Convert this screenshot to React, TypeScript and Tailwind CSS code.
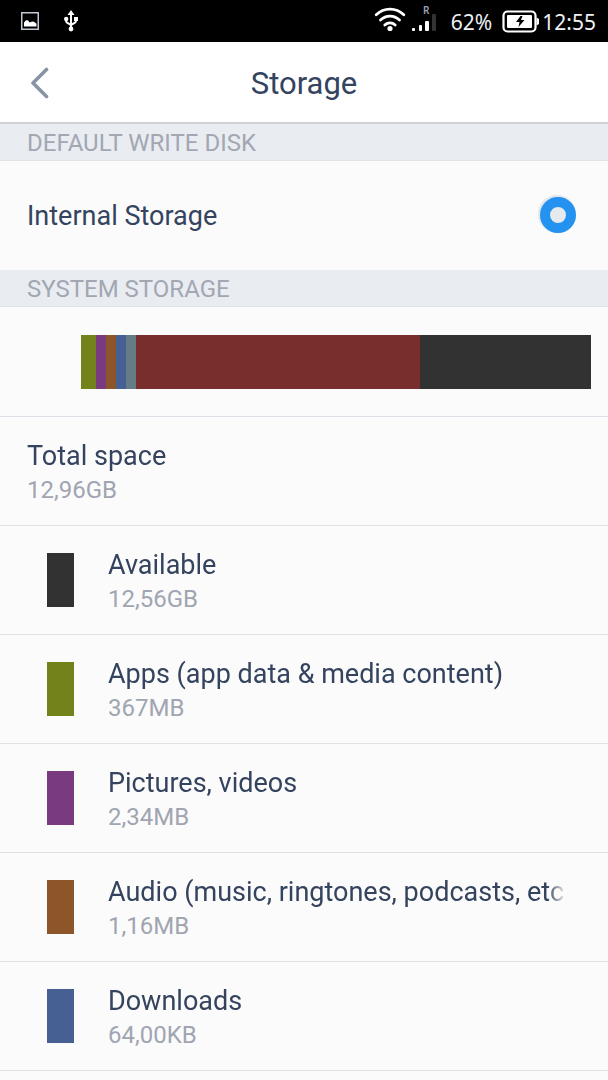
import { useState } from 'react';

interface StorageItem {
    label: string;
    size: string;
    swatch: string;
}

const segments = [
    { color: 'bg-[#74821c]', share: 15 },
    { color: 'bg-[#793a80]', share: 10 },
    { color: 'bg-[#8d5629]', share: 10 },
    { color: 'bg-[#466094]', share: 10 },
    { color: 'bg-[#637c85]', share: 10 },
    { color: 'bg-[#792e2e]', share: 284 },
    { color: 'bg-[#323232]', share: 171 },
];

const items: StorageItem[] = [
    { label: 'Available', size: '12,56GB', swatch: 'bg-[#323232]' },
    {
        label: 'Apps (app data & media content)',
        size: '367MB',
        swatch: 'bg-[#74821c]',
    },
    { label: 'Pictures, videos', size: '2,34MB', swatch: 'bg-[#793a80]' },
    {
        label: 'Audio (music, ringtones, podcasts, etc.)',
        size: '1,16MB',
        swatch: 'bg-[#8d5629]',
    },
    { label: 'Downloads', size: '64,00KB', swatch: 'bg-[#466094]' },
];

function StatusBar() {
    return (
        <div className="flex h-[42px] items-center justify-between bg-black pr-3 pl-5 font-['Noto_Sans',sans-serif] text-[21px] leading-[28px] text-[#eef0f5]">
            <div className="flex items-center gap-6">
                <svg width="20" height="20" viewBox="0 0 20 20">
                    <rect
                        x="1.75"
                        y="1.75"
                        width="16.5"
                        height="16.5"
                        fill="none"
                        stroke="#c3c8d8"
                        strokeWidth="1.5"
                    />
                    <path
                        d="M4 15.5v-4l1.5-1.8 1.5-.6 1.5.8 1.2 1.6 1.8-.7 1.5-.3 1.7.7 1.8 1.5v2.800z"
                        fill="#fff"
                    />
                </svg>
                <svg
                    width="14"
                    height="22"
                    viewBox="0 0 14 22"
                    fill="none"
                    stroke="#fff"
                    strokeWidth="2"
                >
                    <path d="M7 3v16M2 9v2c0 3 5 2 5 5M12 9v2c0 3-5 2-5 5" />
                    <path d="M7 0 10.500 5h-7z" fill="#fff" stroke="none" />
                    <circle cx="2.200" cy="9" r="2.200" fill="#fff" stroke="none" />
                    <path d="M10 7h4v4h-4z" fill="#fff" stroke="none" />
                    <circle cx="7" cy="19" r="2.400" fill="#fff" stroke="none" />
                </svg>
            </div>

            <div className="flex items-center">
                <svg
                    width="32"
                    height="28"
                    viewBox="0 0 32 28"
                    fill="none"
                    stroke="#fff"
                    strokeWidth="2.800"
                    strokeLinecap="round"
                >
                    <path d="M2.200 7.800C10 .2 22 .2 29.800 7.800" />
                    <path d="M6.500 13C12 7.800 20 7.800 25.500 13" />
                    <path d="M10.800 18c3-2.800 7.400-2.800 10.400 0" />
                    <circle cx="16" cy="21.500" r="2.600" fill="#fff" stroke="none" />
                </svg>
                {/* Signal strength with roaming mark */}
                <svg className="ml-1.5" width="25" height="34" viewBox="0 0 25 34">
                    <text
                        x="11"
                        y="10"
                        fontSize="10"
                        fontWeight="600"
                        fill="#9aa1b3"
                    >
                        R
                    </text>
                    <g fill="#fff">
                        <rect x="0" y="24" width="3" height="3" rx="1" />
                        <rect x="7" y="21" width="3" height="6" rx="1" />
                        <rect x="13" y="17" width="4" height="10" rx="1" />
                    </g>
                    <rect x="20" y="10" width="4" height="17" rx="1" fill="#333" />
                </svg>
                <span className="ml-3.5 pt-0.5">62%</span>
                <svg className="ml-2.5" width="38" height="24" viewBox="0 0 38 24">
                    <rect
                        x="1.500"
                        y="2.500"
                        width="32"
                        height="20"
                        rx="4"
                        fill="none"
                        stroke="#fff"
                        strokeWidth="2.200"
                    />
                    <rect x="5" y="6" width="25" height="13" rx="1" fill="#fff" />
                    <path d="M34.500 8.500l2.500 1.500v5l-2.500 1.500z" fill="#fff" />
                    <path d="M18.500 7 14 13h3.500L16.500 18l6-7h-3.500L20.500 7z" fill="#000" />
                </svg>
                <span className="ml-0.5 pt-0.5">12:55</span>
            </div>
        </div>
    );
}

function SectionTitle({ children }: { children: string }) {
    return (
        <h2 className="flex h-[37px] items-end border-b border-[#e0e4e9] bg-[#e9ecf1] px-[27px] text-[24px] leading-[34px] text-[#a2a7b2]">
            {children}
        </h2>
    );
}

function RowText({ label, size }: { label: string; size: string }) {
    return (
        <div className="min-w-0 flex-1 pt-0.5">
            {/* Long labels fade out at the right edge */}
            <div className="overflow-hidden mask-r-from-[calc(100%-20px)] text-[27px] leading-[36px] whitespace-nowrap text-[#34435e]">
                {label}
            </div>
            <div className="text-[24px] leading-[32px] text-[#a0a5b1]">
                {size}
            </div>
        </div>
    );
}

export default function App() {
    const [disk, setDisk] = useState('internal');

    return (
        <div className="min-h-screen bg-[#fbfbfb] font-[Roboto,sans-serif]">
            <StatusBar />

            <header className="grid h-[82px] grid-cols-[80px_1fr_80px] items-center border-b-2 border-[#cdd1d6] bg-white">
                <button
                    type="button"
                    aria-label="Back"
                    className="flex h-full items-center pt-0.5 pl-[30px]"
                >
                    <svg width="20" height="32" viewBox="0 0 20 32">
                        <path
                            d="M16.500 2.500 3 16l13.500 13.500"
                            fill="none"
                            stroke="#8a93a3"
                            strokeWidth="3.600"
                            strokeLinecap="round"
                            strokeLinejoin="round"
                        />
                    </svg>
                </button>
                <h1 className="pt-1 text-center text-[31px] leading-[36px] text-[#34435e]">
                    Storage
                </h1>
            </header>

            <SectionTitle>DEFAULT WRITE DISK</SectionTitle>
            <label className="flex h-[109px] items-center justify-between pr-8 pl-[27px] text-[27px] text-[#34435e]">
                <span className="pt-0.5">Internal Storage</span>
                <input
                    type="radio"
                    name="disk"
                    value="internal"
                    checked={disk === 'internal'}
                    onChange={(e) => setDisk(e.target.value)}
                    className="mb-0.5 size-9 appearance-none rounded-full border border-[#cfd4da] bg-[#e6e9ed] shadow-[-1px_-1px_1px_1px_#e2e5e9] checked:border-[10px] checked:border-[#2492f0]"
                />
            </label>

            <SectionTitle>SYSTEM STORAGE</SectionTitle>
            <div className="border-b border-[#dbdfe6] pt-7 pr-[17px] pb-[27px] pl-[81px]">
                <div className="flex h-[54px]">
                    {segments.map((segment) => (
                        <div
                            key={segment.color}
                            className={`basis-0 ${segment.color}`}
                            style={{ flexGrow: segment.share }}
                        />
                    ))}
                </div>
            </div>

            <div className="flex h-[109px] items-center border-b border-[#dfe1e5] px-[27px]">
                <RowText label="Total space" size="12,96GB" />
            </div>
            <ul>
                {items.map((item) => (
                    <li
                        key={item.label}
                        className="flex h-[109px] items-center gap-[34px] border-b border-[#dfe1e5] pr-[41px] pl-[47px]"
                    >
                        <span className={`h-[54px] w-[27px] ${item.swatch}`} />
                        <RowText label={item.label} size={item.size} />
                    </li>
                ))}
            </ul>
        </div>
    );
}
